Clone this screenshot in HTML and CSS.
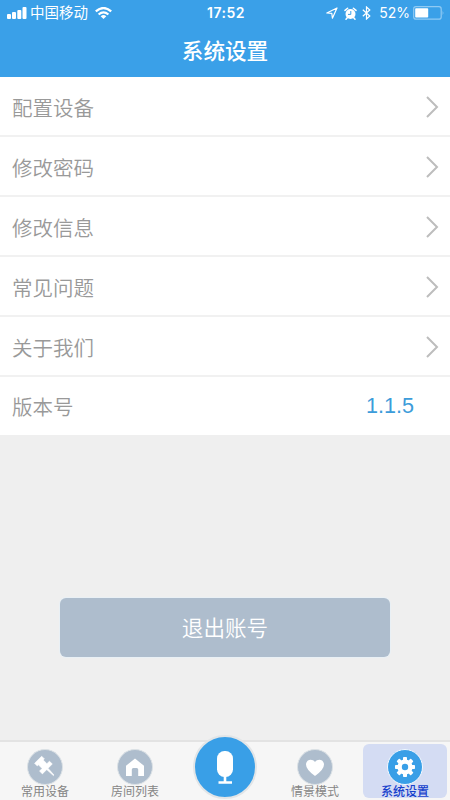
FILE: index.html
```html
<!DOCTYPE html>
<html lang="zh-CN">
<head>
<meta charset="utf-8">
<title>系统设置</title>
<link rel="stylesheet" href="styles.css">
</head>
<body>
<div class="app">
  <header class="header">
    <div class="status">
      <div class="status-left">
        <svg class="signal" width="20" height="12" viewBox="0 0 20 12" fill="currentColor"><rect x="0" y="7" width="4" height="5" rx="1"/><rect x="5" y="5" width="4" height="7" rx="1"/><rect x="10.300" y="3" width="4" height="9" rx="1"/><rect x="15.500" y="0" width="4" height="12" rx="1"/></svg>
        <span class="carrier">中国移动</span>
        <svg class="wifi" width="17" height="12" viewBox="0 0 17 12" fill="none" stroke="currentColor" stroke-width="2.300"><path d="M.8 4.300Q8.500-2.200 16.200 4.300M3.600 7.500Q8.500 3.300 13.400 7.500"/><path d="M5.700 9.200Q8.500 7 11.300 9.200L8.500 12Z" fill="currentColor" stroke="none"/></svg>
      </div>
      <time class="clock">17:52</time>
      <div class="status-right">
        <svg class="location" width="12" height="12" viewBox="0 0 12 12" fill="none" stroke="currentColor" stroke-width="1.200" stroke-linejoin="round"><path d="M.8 6L11 1 6.400 11.200 5.800 6.300Z"/></svg>
        <svg class="alarm" width="13" height="13" viewBox="0 0 13 13"><circle cx="6.500" cy="7" r="5" fill="currentColor"/><path d="M1 3.400L3.600 1.200M9.400 1.200L12 3.400M3.500 10.500L2 12.200M9.500 10.500L11 12.200" stroke="currentColor" stroke-width="1.500" stroke-linecap="round"/><path d="M6.800 4V7.400H4" fill="none" stroke="#3aa0e8" stroke-width="1"/></svg>
        <svg class="bluetooth" width="9" height="14" viewBox="0 0 9 14" fill="none" stroke="currentColor" stroke-width="1.200"><path d="M.8 3.800L7.800 10 4.500 13V1L7.800 4 .8 10.200"/></svg>
        <span class="percent">52%</span>
        <svg class="battery" width="32" height="14" viewBox="0 0 32 14"><rect x=".7" y=".7" width="27.500" height="12.400" rx="2.200" fill="none" stroke="#90caf3" stroke-width="1.200"/><rect x="2.200" y="2.300" width="13" height="9.200" rx=".8" fill="#fff"/><path d="M29.600 4.500Q31.300 6.900 29.600 9.300Z" fill="#90caf3"/></svg>
      </div>
    </div>
    <h1 class="title">系统设置</h1>
  </header>
  <main class="content">
    <ul class="list">
      <li class="row"><span>配置设备</span><svg class="chevron" viewBox="0 0 14 24"><path d="M2 2L12 12 2 22"/></svg></li>
      <li class="row"><span>修改密码</span><svg class="chevron" viewBox="0 0 14 24"><path d="M2 2L12 12 2 22"/></svg></li>
      <li class="row"><span>修改信息</span><svg class="chevron" viewBox="0 0 14 24"><path d="M2 2L12 12 2 22"/></svg></li>
      <li class="row"><span>常见问题</span><svg class="chevron" viewBox="0 0 14 24"><path d="M2 2L12 12 2 22"/></svg></li>
      <li class="row"><span>关于我们</span><svg class="chevron" viewBox="0 0 14 24"><path d="M2 2L12 12 2 22"/></svg></li>
      <li class="row"><span>版本号</span><span class="version">1.1.5</span></li>
    </ul>
    <button class="logout">退出账号</button>
  </main>
  <nav class="tabs">
    <a class="tab"><span class="disc"><svg viewBox="0 0 34 34"><g transform="translate(15.800 15.400) rotate(-45)" fill="#fff" stroke="#fff" stroke-width=".6" stroke-linejoin="round"><path d="M-5-8H5V-4.200H3.400V1H7V5H-7V1H-3.400V-4.200H-5Z"/><path d="M-.9 5H.9L.4 14H-.4Z"/></g></svg></span><span>常用设备</span></a>
    <a class="tab"><span class="disc"><svg viewBox="0 0 34 34"><path d="M17 8.500L26 15.800V26H20.200V19.500Q20.200 18 18.700 18H15.300Q13.800 18 13.800 19.500V26H8V15.800Z" fill="#fff"/></svg></span><span>房间列表</span></a>
    <a class="tab voice"><span class="mic"><svg viewBox="0 0 60 60"><rect x="22" y="14" width="16" height="26" rx="7.500" fill="#fff"/><path d="M30 39V45M23.500 45.500H37" stroke="#fff" stroke-width="2.600" fill="none"/></svg></span></a>
    <a class="tab"><span class="disc"><svg viewBox="0 0 34 34"><path d="M17 26Q8 19.800 8 14.600C8 9 14.500 8.200 17 12C19.500 8.200 26 9 26 14.600Q26 19.800 17 26Z" fill="#fff"/></svg></span><span>情景模式</span></a>
    <a class="tab active"><span class="disc"><svg viewBox="0 0 34 34"><g transform="translate(17 17)" fill="#fff"><g id="teeth"><rect x="-2" y="-10" width="4" height="20" rx=".8"/><rect x="-10" y="-2" width="20" height="4" rx=".8"/></g><use href="#teeth" transform="rotate(45)"/><circle r="7.600"/><circle r="3.200" fill="#399fe7"/></g></svg></span><span>系统设置</span></a>
  </nav>
</div>
</body>
</html>
```
FILE: styles.css
```css
* { box-sizing: border-box; }

body {
  margin: 0;
  font-family: "Liberation Sans", "Noto Sans CJK SC", sans-serif;
}

svg { display: block; flex: none; }

.app {
  display: flex;
  flex-direction: column;
  width: 450px;
  height: 800px;
  overflow: hidden;
  background: #efefef;
}

.header {
  flex: none;
  height: 77px;
  background: #3aa0e8;
  color: #fff;
}

.status {
  display: grid;
  grid-template-columns: 1fr auto 1fr;
  align-items: center;
  height: 25px;
  padding: 1px 5px 0 7px;
  font: 14px/24px Inter, "Noto Sans CJK SC", sans-serif;
}

.status-left, .status-right { display: flex; align-items: center; }
.status-right { justify-content: flex-end; }
.carrier { margin: 0 7px 0 3px; font-size: 14.500px; }
.clock { font-weight: 600; letter-spacing: .5px; }
.location { margin-right: 6px; }
.bluetooth { margin-left: 5px; }
.percent { margin: 0 3px 0 8px; font-size: 14px; }

.title {
  margin: 10px 0 0;
  font-size: 21.600px;
  font-weight: 500;
  line-height: 34px;
  text-align: center;
}

.content { flex: 1; }

.list {
  margin: 0;
  padding: 0;
  list-style: none;
  background: #fff;
}

.row {
  display: flex;
  align-items: center;
  justify-content: space-between;
  height: 60px;
  padding: 1px 11px 0 12px;
  border-bottom: 2px solid #f1f1f1;
  color: #999;
  font-size: 20.500px;
  font-weight: 350;
}

.row:last-child {
  height: 58px;
  padding: 0 36px 0 12px;
  border: 0;
}

.chevron {
  width: 14px;
  height: 24px;
  fill: none;
  stroke: #bdbdbd;
  stroke-width: 2;
}

.version { color: #3c9cda; font-size: 21.600px; }

.logout {
  display: block;
  width: 330px;
  height: 59px;
  margin: 163px auto 0;
  padding: 0 0 2px;
  border: 0;
  border-radius: 6px;
  background: #aebdcd;
  box-shadow: 0 0 0 1px #e9f0f5;
  color: #fff;
  font: 350 21.600px/57px "Noto Sans CJK SC", sans-serif;
}

.tabs {
  display: grid;
  grid-template-columns: repeat(5, 1fr);
  flex: none;
  height: 60px;
  border-top: 2px solid #e3e3e3;
  background: #f6f6f6;
}

.tab {
  display: flex;
  flex-direction: column;
  align-items: center;
  height: 54px;
  margin: 2px 3px 0;
  padding-top: 5px;
  border-radius: 6px;
  color: #858585;
  font-size: 12px;
  line-height: 14px;
}

.disc {
  width: 36px;
  height: 36px;
  border: 1px solid #dce2e6;
  border-radius: 50%;
  background: #aebdcd;
}

.active { background: #d4dcf3; color: #1640cc; font-weight: 500; }
.active .disc { border-color: #f4f9ff; background: #399fe7; }

.voice { margin-top: -7px; padding: 0; }

.mic {
  width: 64px;
  height: 64px;
  border: 2px solid #e2e5e7;
  border-radius: 50%;
  background: #399fe7;
}
```
